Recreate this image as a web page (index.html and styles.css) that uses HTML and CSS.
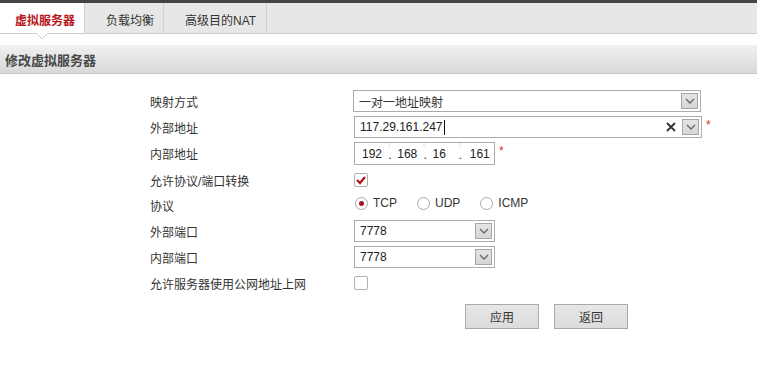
FILE: index.html
```html
<!DOCTYPE html>
<html>
<head>
<meta charset="utf-8">
<link rel="stylesheet" href="styles.css">
</head>
<body>
<div class="topbar"></div>
<div class="tabs">
  <div class="tab tab-active">虚拟服务器
    <svg class="pointer" width="12" height="7" viewBox="0 0 12 7"><polygon points="0,0 12,0 6,6" fill="#fff"/><polyline points="0.5,0.5 6,6 11.5,0.5" fill="none" stroke="#cfcfcf" stroke-width="1"/></svg>
  </div>
  <div class="tab tab-2">负载均衡</div>
  <div class="tab tab-3">高级目的NAT</div>
</div>
<div class="title">修改虚拟服务器</div>
<div class="form">
  <div class="row r1">
    <div class="label">映射方式</div>
    <div class="select select-wide shift">
      <span class="value">一对一地址映射</span>
      <span class="arrow"><svg width="10" height="6" viewBox="0 0 10 6"><polyline points="1,1 5,5 9,1" fill="none" stroke="#666" stroke-width="1.3"/></svg></span>
    </div>
  </div>
  <div class="row r2">
    <div class="label">外部地址</div>
    <div class="select select-wide">
      <span class="value text-dark">117.29.161.247</span><span class="caret"></span>
      <span class="spacer"></span>
      <svg class="clear" width="10" height="10" viewBox="0 0 10 10"><path d="M1 1 L9 9 M9 1 L1 9" stroke="#333" stroke-width="1.8"/></svg>
      <span class="arrow"><svg width="10" height="6" viewBox="0 0 10 6"><polyline points="1,1 5,5 9,1" fill="none" stroke="#666" stroke-width="1.3"/></svg></span>
    </div>
    <span class="req">*</span>
  </div>
  <div class="row r3">
    <div class="label">内部地址</div>
    <div class="ipbox">
      <span class="oct">192</span><span class="dot">.</span>
      <span class="oct">168</span><span class="dot">.</span>
      <span class="oct">16</span><span class="dot">.</span>
      <span class="oct oct-last">161</span>
    </div>
    <span class="req">*</span>
  </div>
  <div class="row r4">
    <div class="label">允许协议/端口转换</div>
    <span class="check"><svg width="12" height="12" viewBox="0 0 12 12"><polyline points="2,6 5,9 10,3" fill="none" stroke="#b3141a" stroke-width="2.2"/></svg></span>
  </div>
  <div class="row r5">
    <div class="label">协议</div>
    <div class="radios">
      <span class="radio radio-on"><span class="radio-dot"></span></span><span class="rtext">TCP</span>
      <span class="radio"></span><span class="rtext">UDP</span>
      <span class="radio"></span><span class="rtext">ICMP</span>
    </div>
  </div>
  <div class="row r6">
    <div class="label">外部端口</div>
    <div class="select select-port">
      <span class="value text-dark">7778</span>
      <span class="spacer"></span>
      <span class="arrow"><svg width="10" height="6" viewBox="0 0 10 6"><polyline points="1,1 5,5 9,1" fill="none" stroke="#666" stroke-width="1.3"/></svg></span>
    </div>
  </div>
  <div class="row r7">
    <div class="label">内部端口</div>
    <div class="select select-port">
      <span class="value text-dark">7778</span>
      <span class="spacer"></span>
      <span class="arrow"><svg width="10" height="6" viewBox="0 0 10 6"><polyline points="1,1 5,5 9,1" fill="none" stroke="#666" stroke-width="1.3"/></svg></span>
    </div>
  </div>
  <div class="row r8">
    <div class="label">允许服务器使用公网地址上网</div>
    <span class="check"></span>
  </div>
  <div class="actions">
    <button class="btn">应用</button>
    <button class="btn">返回</button>
  </div>
</div>
</body>
</html>
```
FILE: styles.css
```css
* { box-sizing: border-box; }
html, body { margin: 0; padding: 0; background: #fff; }
body {
  font-family: "Liberation Sans", "Noto Sans CJK SC", sans-serif;
  font-size: 12px;
  color: #333;
}
.topbar { height: 3px; background: #444; }
.tabs {
  display: flex;
  height: 31px;
  background: #e6e7e6;
  border-bottom: 1px solid #cbcbcb;
}
.tab {
  position: relative;
  height: 30px;
  padding-top: 8px;
  line-height: 20px;
  border-right: 1px solid #d2d2d2;
  color: #333;
  white-space: nowrap;
}
.tab-active {
  width: 85px;
  padding-left: 15px;
  background: #fff;
  color: #b8141b;
  font-weight: bold;
}
.tab-2 { width: 79px; padding-left: 21px; }
.tab-3 { width: 103px; padding-left: 21px; }
.pointer { position: absolute; left: 36px; top: 30px; }
.title {
  margin-top: 11px;
  height: 29px;
  padding: 4px 0 0 5px;
  line-height: 24px;
  font-size: 13px;
  font-weight: bold;
  color: #484848;
  background: linear-gradient(#f1f1f1, #d8d8d8);
  border-bottom: 1px solid #c9c9c9;
}
.form { padding: 14px 0 0 150px; }
.row { display: flex; align-items: center; height: 26px; }
.r3 { height: 27px; }
.r5 { height: 25px; }
.label { width: 204px; flex: none; color: #333; }
.select {
  display: flex;
  align-items: center;
  height: 22px;
  border: 1px solid #ababab;
  background: #fff;
  padding: 0 2px 0 5px;
}
.shift { margin-left: -1px; }
.select-wide { width: 348px; justify-content: space-between; }
.r2 .select-wide { justify-content: flex-start; height: 22px; }
.select-port { width: 141px; padding-left: 5px; }
.value { color: #333; }
.text-dark { color: #222; }
.caret { width: 1px; height: 15px; background: #111; margin-left: 1px; }
.spacer { flex: 1; }
.clear { margin-right: 6px; }
.arrow {
  display: flex;
  align-items: center;
  justify-content: center;
  width: 17px;
  height: 16px;
  border: 1px solid #a6a6a6;
  background: linear-gradient(#e4e4e4, #d6d6d6);
}
.req { color: #e0262b; margin-left: 4px; align-self: flex-start; margin-top: 4px; font-size: 12px; }
.ipbox {
  display: flex;
  align-items: center;
  width: 141px;
  height: 23px;
  border: 1px solid #ababab;
  padding-left: 1px;
}
.oct { width: 33px; padding-left: 6px; color: #222; }
.oct-last { padding-left: 8px; }
.dot {
  width: 3px;
  height: 21px;
  line-height: 24px;
  text-align: center;
  color: #333;
  background: linear-gradient(#f0f0f0, #fff 35%);
}
.check {
  display: flex;
  align-items: center;
  justify-content: center;
  width: 14px;
  height: 14px;
  border: 1px solid #b0b0b0;
  border-radius: 2px;
  background: #fff;
}
.radios { display: flex; align-items: center; padding-bottom: 5px; }
.radio {
  display: flex;
  align-items: center;
  justify-content: center;
  width: 13px;
  height: 13px;
  border: 1px solid #a9a9a9;
  border-radius: 50%;
  background: #fff;
  margin-left: 1px;
}
.radio-dot { width: 5px; height: 5px; border-radius: 50%; background: #a8121a; }
.rtext { margin-left: 5px; margin-right: 19px; color: #333; }
.actions { display: flex; gap: 15px; padding: 8px 0 0 315px; }
.btn {
  width: 74px;
  height: 25px;
  border: 1px solid #a9a9a9;
  background: linear-gradient(#e6e6e6, #dcdcdc);
  font-family: "Liberation Sans", "Noto Sans CJK SC", sans-serif;
  font-size: 12px;
  color: #333;
  padding: 0;
}
```
